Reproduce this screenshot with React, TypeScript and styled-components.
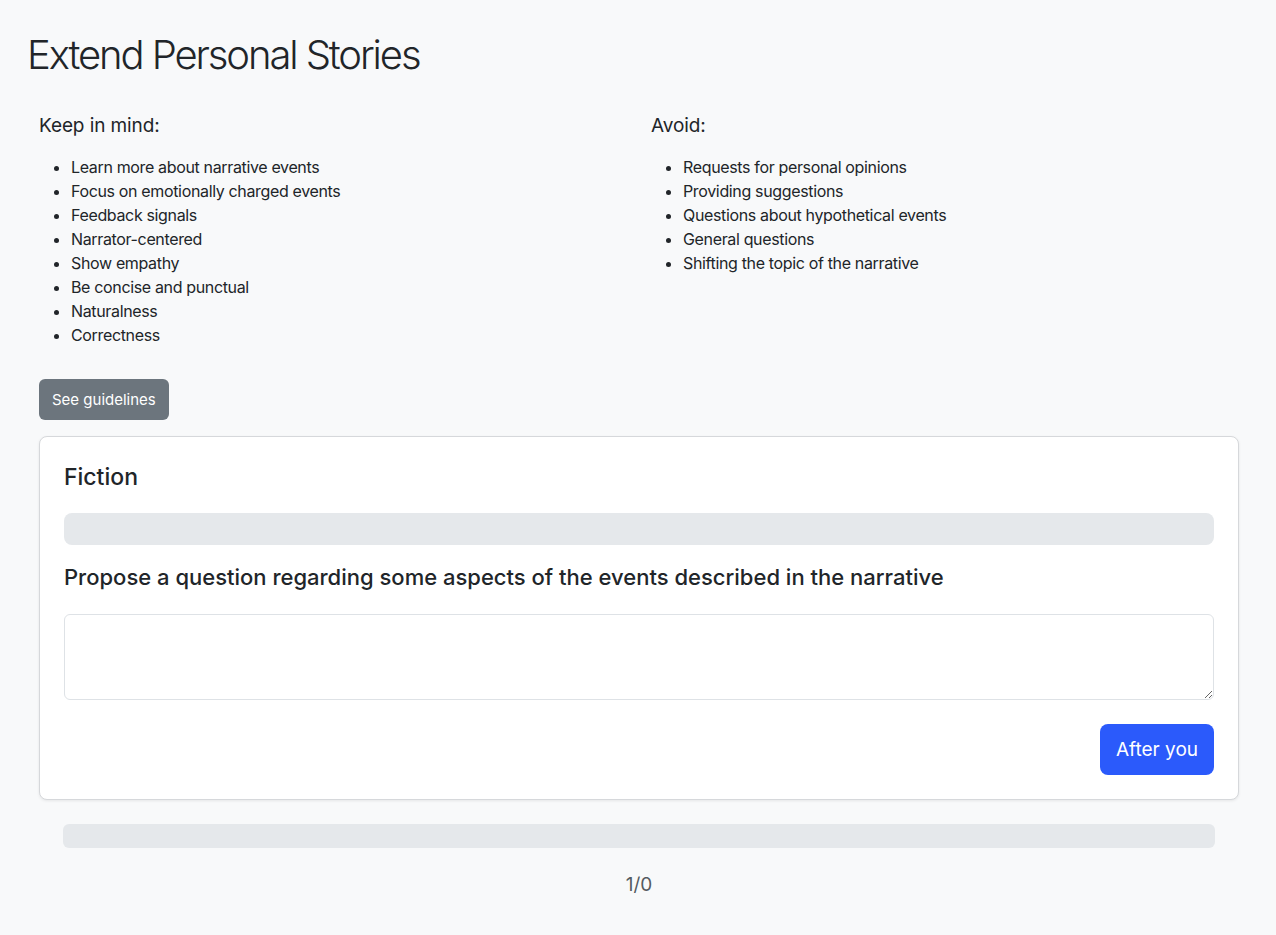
import React from "react";
import styled, { createGlobalStyle } from "styled-components";

const GlobalStyle = createGlobalStyle`
  * { box-sizing: border-box; }
  body {
    margin: 0;
    background: #f8f9fa;
    font-family: Inter, "Noto Sans", "Liberation Sans", sans-serif;
    color: #212529;
  }
`;

const Page = styled.div`
  padding: 31px 25px 40px 27px;
`;

const Title = styled.h1`
  margin: 0 0 35px 0;
  font-size: 40px;
  font-weight: 300;
  line-height: 48px;
  letter-spacing: -2.1px;
`;

const Content = styled.div`
  padding-left: 12px;
`;

const Columns = styled.div`
  display: grid;
  grid-template-columns: 612px 1fr;
`;

const ColTitle = styled.h5`
  margin: 0 0 17px 0;
  font-size: 19px;
  font-weight: 400;
  line-height: 24px;
  letter-spacing: -0.1px;
`;

const List = styled.ul`
  margin: 0;
  padding-left: 32px;
  font-size: 16px;
  line-height: 24px;
  letter-spacing: -0.35px;
`;

const GuideButton = styled.button`
  margin-top: 32px;
  height: 41px;
  padding: 0 13px;
  border: none;
  border-radius: 6px;
  background: #6c757d;
  color: #fff;
  font-family: inherit;
  font-size: 15px;
  cursor: pointer;
`;

const Card = styled.div`
  margin-top: 16px;
  width: 1200px;
  background: #fff;
  border: 1px solid #d6d8db;
  border-radius: 8px;
  box-shadow: 0 1px 3px rgba(0, 0, 0, 0.08);
  padding: 24px;
  display: flex;
  flex-direction: column;
`;

const CardTitle = styled.h4`
  margin: 0 0 20px 0;
  font-size: 23px;
  font-weight: 500;
  line-height: 32px;
`;

const Bar = styled.div<{ $h: number; $r: number }>`
  height: ${(p) => p.$h}px;
  border-radius: ${(p) => p.$r}px;
  background: #e5e8eb;
`;

const Question = styled.h4`
  margin: 15px 0 20px 0;
  font-size: 22px;
  font-weight: 500;
  line-height: 34px;
`;

const TextArea = styled.textarea`
  display: block;
  width: 100%;
  height: 86px;
  border: 1px solid #dee2e6;
  border-radius: 6px;
  font-family: inherit;
  font-size: 16px;
  padding: 8px 12px;
  resize: vertical;
  outline: none;
`;

const Actions = styled.div`
  display: flex;
  justify-content: flex-end;
  margin-top: 24px;
`;

const PrimaryButton = styled.button`
  width: 114px;
  height: 51px;
  border: none;
  border-radius: 8px;
  background: #2b5afb;
  color: #fff;
  font-family: inherit;
  font-size: 19px;
  cursor: pointer;
`;

const Footer = styled.div`
  width: 1152px;
  margin: 24px 0 0 24px;
`;

const Counter = styled.div`
  width: 1200px;
  text-align: center;
  margin-top: 25px;
  font-size: 19px;
  line-height: 24px;
  color: #555b61;
`;

const keep = [
  "Learn more about narrative events",
  "Focus on emotionally charged events",
  "Feedback signals",
  "Narrator-centered",
  "Show empathy",
  "Be concise and punctual",
  "Naturalness",
  "Correctness",
];

const avoid = [
  "Requests for personal opinions",
  "Providing suggestions",
  "Questions about hypothetical events",
  "General questions",
  "Shifting the topic of the narrative",
];

export default function App() {
  return (
    <>
      <GlobalStyle />
      <Page>
        <Title>Extend Personal Stories</Title>
        <Content>
          <Columns>
            <div>
              <ColTitle>Keep in mind:</ColTitle>
              <List>
                {keep.map((k) => (
                  <li key={k}>{k}</li>
                ))}
              </List>
            </div>
            <div>
              <ColTitle>Avoid:</ColTitle>
              <List>
                {avoid.map((k) => (
                  <li key={k}>{k}</li>
                ))}
              </List>
            </div>
          </Columns>
          <GuideButton>See guidelines</GuideButton>
          <Card>
            <CardTitle>Fiction</CardTitle>
            <Bar $h={32} $r={8} />
            <Question>Propose a question regarding some aspects of the events described in the narrative</Question>
            <TextArea />
            <Actions>
              <PrimaryButton>After you</PrimaryButton>
            </Actions>
          </Card>
          <Footer>
            <Bar $h={24} $r={6} />
          </Footer>
          <Counter>1/0</Counter>
        </Content>
      </Page>
    </>
  );
}
